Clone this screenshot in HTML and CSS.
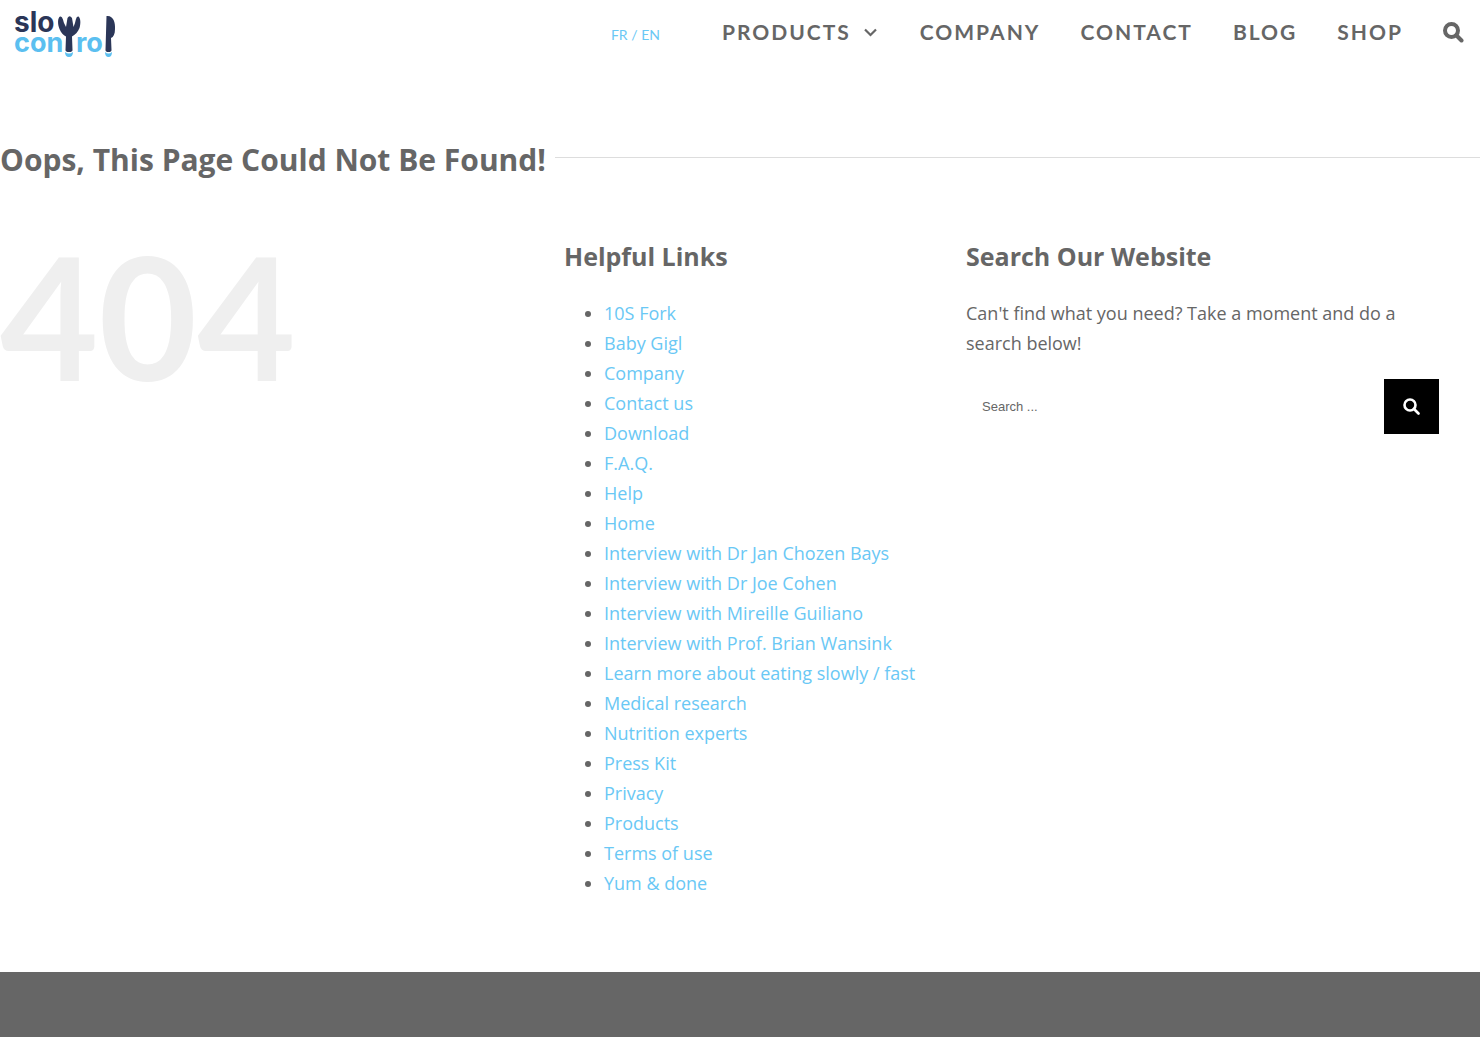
FILE: index.html
```
<!DOCTYPE html>
<html lang="en">
  <head>
    <meta charset="UTF-8" />
    <meta name="viewport" content="width=device-width, initial-scale=1.0" />
    <title>Page not found - Slow Control</title>
    <link rel="stylesheet" href="styles.css">
  </head>
  <body>
    <header class="header">
      <a class="logo" href="#" aria-label="Slow Control">
        <svg width="102" height="48" viewBox="0 0 102 48">
          <text class="logo-dark" x="-1" y="22">slo</text>
          <text class="logo-blue" x="-1" y="42">con</text>
          <text class="logo-blue" x="61" y="42">ro</text>
          <!-- fork -->
          <path fill="#2b3658" d="M45 6.500C42.500 8 42.500 14 44.500 19C46 23 49 25.500 51 26.500L50.500 40Q50.500 42 54 42T57.500 40L57 26.500C60 25 63 22 64.500 18C66 13 65.500 8 63.500 6.500C61.500 6 61 9 60 13L58.500 17L57 8Q54.500 4.500 52.500 8L51 17L49 13C48 9 47 6 45 6.500Z"/>
          <path fill="#5bbff0" d="M50 42Q54 45 58 42Q58 47 54 47T50 42Z"/>
          <!-- knife -->
          <path fill="#2b3658" d="M91.500 6C98 5 100.500 12 100 19C100 24 98.500 27 96 28L96.500 40Q96.500 42 93.500 42T90.500 40Z"/>
          <path fill="#5bbff0" d="M90 42Q93.500 45 97 42Q97 47 93.500 47T90 42Z"/>
        </svg>
      </a>
      <div class="lang"><a href="#">FR</a> / <a href="#">EN</a></div>
      <nav class="nav">
        <a class="has-menu" href="#">PRODUCTS
          <svg class="arrow" width="13" height="9" viewBox="0 0 13 9"><path d="M1 1.500l5.500 5.500 5.500-5.500" fill="none" stroke="currentColor" stroke-width="2.200"/></svg>
        </a>
        <a href="#">COMPANY</a>
        <a href="#">CONTACT</a>
        <a href="#">BLOG</a>
        <a href="#">SHOP</a>
        <a href="#" aria-label="Search">
          <svg class="search-icon" width="21" height="21" viewBox="0 0 21 21"><circle cx="8.500" cy="8.500" r="6.500" fill="none" stroke="currentColor" stroke-width="4"/><path d="M13.500 13.500l5 5" stroke="currentColor" stroke-width="4" stroke-linecap="round"/></svg>
        </a>
      </nav>
    </header>

    <main class="main">
      <div class="title">
        <h1>Oops, This Page Could Not Be Found!</h1>
        <div class="title-line"></div>
      </div>
      <div class="columns">
        <div class="error">404</div>
        <section>
          <h2>Helpful Links</h2>
          <ul class="links">
            <li><a href="#">10S Fork</a></li>
            <li><a href="#">Baby Gigl</a></li>
            <li><a href="#">Company</a></li>
            <li><a href="#">Contact us</a></li>
            <li><a href="#">Download</a></li>
            <li><a href="#">F.A.Q.</a></li>
            <li><a href="#">Help</a></li>
            <li><a href="#">Home</a></li>
            <li><a href="#">Interview with Dr Jan Chozen Bays</a></li>
            <li><a href="#">Interview with Dr Joe Cohen</a></li>
            <li><a href="#">Interview with Mireille Guiliano</a></li>
            <li><a href="#">Interview with Prof. Brian Wansink</a></li>
            <li><a href="#">Learn more about eating slowly / fast</a></li>
            <li><a href="#">Medical research</a></li>
            <li><a href="#">Nutrition experts</a></li>
            <li><a href="#">Press Kit</a></li>
            <li><a href="#">Privacy</a></li>
            <li><a href="#">Products</a></li>
            <li><a href="#">Terms of use</a></li>
            <li><a href="#">Yum &amp; done</a></li>
          </ul>
        </section>
        <section class="search">
          <h2>Search Our Website</h2>
          <p>Can't find what you need? Take a moment and do a search below!</p>
          <form class="search-form">
            <input type="text" placeholder="Search ..." aria-label="Search" />
            <button type="submit" aria-label="Search">
              <svg width="17" height="17" viewBox="0 0 17 17"><circle cx="7" cy="7" r="5.500" fill="none" stroke="currentColor" stroke-width="2.600"/><path d="M11 11l4.500 4.500" stroke="currentColor" stroke-width="2.600" stroke-linecap="round"/></svg>
            </button>
          </form>
        </section>
      </div>
    </main>

    <footer class="footer"></footer>
  </body>
</html>
```
FILE: styles.css
```
* {
  box-sizing: border-box;
}

body {
  margin: 0;
  min-height: 100vh;
  display: flex;
  flex-direction: column;
  background-color: #fff;
  color: #666;
  font-family: "Open Sans", sans-serif;
  font-size: 18px;
  line-height: 30px;
}

a {
  color: #6ac8f5;
  text-decoration: none;
}

h1,
h2 {
  margin: 0;
  font-weight: 700;
}

h1 {
  font-size: 30px;
  line-height: 40px;
}

h2 {
  font-size: 25px;
  line-height: 32px;
}

.header {
  display: flex;
  height: 64px;
  padding: 0 16px 0 15px;
}

.logo {
  padding-top: 10px;
  margin-right: auto;
}

.logo svg {
  display: block;
  overflow: visible;
}

.logo text {
  font-family: Inter, sans-serif;
  font-weight: 700;
}

.logo-dark {
  font-size: 28px;
  fill: #2b3658;
}

.logo-blue {
  font-size: 27px;
  fill: #5bbff0;
}

.lang {
  margin-right: 62px;
  padding-top: 20px;
  color: #6ac8f5;
  font-family: Lato, sans-serif;
  font-size: 14px;
}

.nav {
  display: flex;
  align-items: center;
  gap: 40px;
}

.nav a {
  display: flex;
  align-items: center;
  color: #666;
  font-family: Lato, sans-serif;
  font-size: 21px;
  font-weight: 700;
  letter-spacing: 2px;
}

.nav .has-menu {
  padding-right: 3px;
}

.arrow {
  margin-left: 13px;
}

.main {
  padding: 76px 0 74px;
}

.title {
  display: flex;
  align-items: center;
  gap: 9px;
}

.title-line {
  flex: 1;
  height: 6px;
  border-top: 1px solid #ddd;
}

.columns {
  display: grid;
  grid-template-columns: 564fr 402fr 514fr;
  padding-top: 60px;
}

.error {
  color: #efefef;
  font-family: Lato, sans-serif;
  font-size: 170px;
  font-weight: 700;
  line-height: 150px;
}

.links {
  margin: 26px 0 0;
  padding-left: 40px;
}

.search {
  padding-right: 41px;
}

.search p {
  margin: 26px 0 21px;
}

.search-form {
  display: flex;
}

.search-form input {
  flex: 1;
  min-width: 0;
  height: 55px;
  padding: 0 16px;
  border: 0;
  background-color: #fff;
  font-family: "Liberation Sans", Arial, sans-serif;
  font-size: 13px;
}

.search-form input::placeholder {
  color: #666;
}

.search-form button {
  width: 55px;
  height: 55px;
  padding: 0;
  border: 0;
  background-color: #000;
  color: #fff;
  cursor: pointer;
}

.search-form svg {
  display: block;
  margin: auto;
}

.footer {
  flex: 1;
  min-height: 65px;
  background-color: #666;
}
```
